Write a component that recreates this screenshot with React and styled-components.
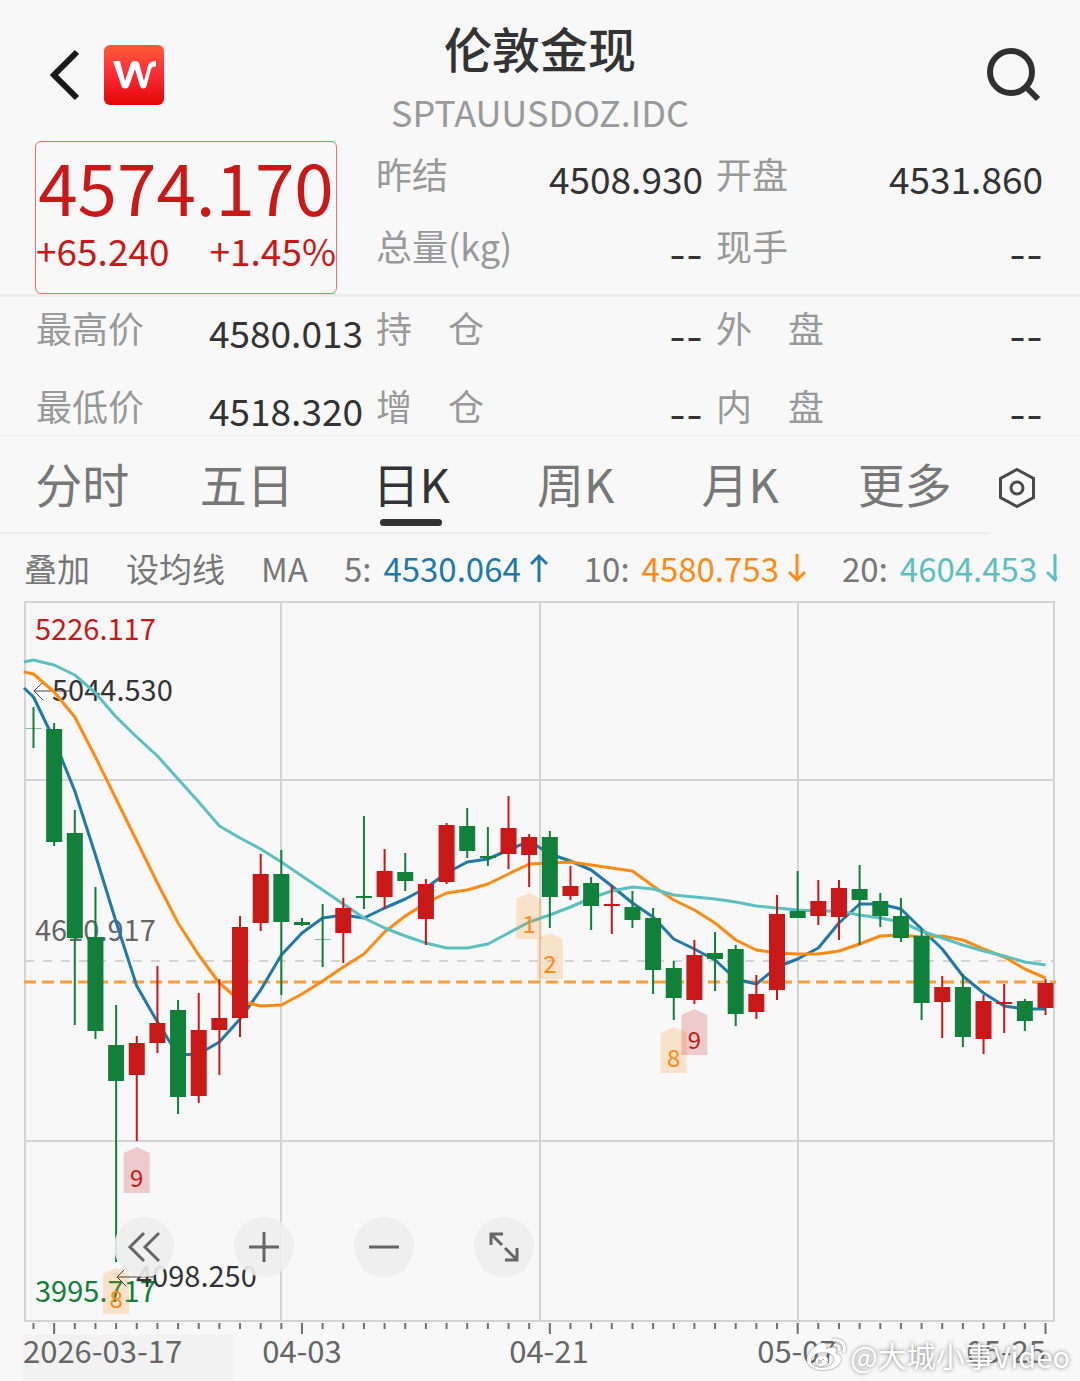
import React, { useState } from 'react';
import styled, { createGlobalStyle } from 'styled-components';
import { FaWeibo } from 'react-icons/fa';

const RED = '#c81818';
const GREEN = '#10803a';
const BLUE = '#2179a8';
const ORANGE = '#ff8a14';
const TEAL = '#5cc0bf';

const CHART_TOP = 2;
const CHART_BOTTOM = 721;
const CHART_LEFT = 25;
const CHART_RIGHT = 1054;
const CANDLE_WIDTH = 16;

const summary = [
  { label: '昨结', value: '4508.930' },
  { label: '开盘', value: '4531.860' },
  { label: '总量(kg)', value: '--' },
  { label: '现手', value: '--' },
];

const details = [
  { label: '最高价', value: '4580.013' },
  { label: '持\u3000仓', value: '--' },
  { label: '外\u3000盘', value: '--' },
  { label: '最低价', value: '4518.320' },
  { label: '增\u3000仓', value: '--' },
  { label: '内\u3000盘', value: '--' },
];

const tabs = ['分时', '五日', '日K', '周K', '月K', '更多'];

const averages = [
  { period: 5, value: '4530.064', color: BLUE, up: true },
  { period: 10, value: '4580.753', color: ORANGE, up: false },
  { period: 20, value: '4604.453', color: TEAL, up: false },
];

// [up, high, low, body top, body bottom]
const candles = [
  [0, 107, 148, 128, 128],
  [0, 123, 246, 129, 242],
  [0, 210, 425, 233, 338],
  [0, 287, 439, 337, 431],
  [0, 405, 662, 445, 481],
  [1, 436, 541, 443, 475],
  [1, 366, 453, 423, 443],
  [0, 400, 514, 410, 497],
  [1, 393, 503, 430, 496],
  [1, 379, 475, 418, 430],
  [1, 316, 437, 327, 418],
  [1, 254, 331, 274, 323],
  [0, 250, 395, 274, 322],
  [0, 318, 326, 322, 325],
  [0, 304, 367, 339, 339],
  [1, 298, 363, 308, 333],
  [0, 216, 309, 296, 297],
  [1, 249, 309, 271, 297],
  [0, 253, 291, 272, 281],
  [1, 279, 345, 284, 319],
  [1, 223, 284, 225, 282],
  [0, 208, 258, 226, 251],
  [0, 227, 266, 256, 257],
  [1, 196, 269, 228, 254],
  [1, 234, 287, 237, 255],
  [0, 231, 328, 237, 297],
  [1, 266, 300, 286, 296],
  [0, 277, 330, 283, 306],
  [1, 285, 334, 304, 305],
  [0, 291, 328, 307, 320],
  [0, 308, 394, 318, 370],
  [0, 361, 420, 368, 398],
  [1, 340, 404, 355, 400],
  [0, 332, 391, 353, 359],
  [0, 345, 426, 349, 414],
  [1, 375, 419, 394, 412],
  [1, 295, 400, 314, 390],
  [0, 271, 318, 311, 318],
  [1, 280, 325, 301, 316],
  [1, 280, 340, 288, 317],
  [0, 265, 345, 289, 300],
  [0, 293, 327, 301, 316],
  [0, 298, 342, 316, 338],
  [0, 329, 420, 336, 403],
  [1, 376, 438, 387, 402],
  [0, 374, 447, 387, 437],
  [1, 395, 454, 401, 439],
  [1, 384, 433, 402, 403],
  [0, 399, 431, 401, 421],
  [1, 379, 415, 383, 408],
];

// the first value of each line sits on the left edge of the chart
const lines = [
  {
    color: BLUE,
    values: [
      88, 97, 140, 191, 255, 322, 386, 422, 455, 454, 442, 419, 390, 355, 333,
      318, 315, 318, 308, 299, 288, 273, 262, 259, 250, 241, 254, 261, 270, 286,
      303, 317, 339, 349, 360, 379, 384, 367, 359, 348, 323, 304, 304, 309, 329,
      349, 376, 393, 406, 409, 409,
    ],
  },
  {
    color: ORANGE,
    values: [
      72, 74, 92, 117, 157, 199, 241, 283, 323, 355, 383, 401, 406, 405, 394,
      381, 367, 354, 332, 316, 303, 293, 290, 284, 274, 264, 263, 262, 265, 268,
      271, 286, 300, 310, 323, 340, 350, 353, 354, 354, 351, 344, 336, 335, 337,
      336, 340, 349, 357, 369, 378,
    ],
  },
  {
    color: TEAL,
    values: [
      62, 60, 65, 75, 93, 117, 137, 156, 179, 202, 226, 238, 249, 262, 276, 290,
      304, 318, 328, 336, 343, 348, 348, 344, 333, 322, 315, 307, 298, 291, 287,
      289, 295, 297, 299, 302, 306, 308, 310, 311, 311, 315, 318, 322, 331, 338,
      345, 351, 356, 362, 365,
    ],
  },
];

const marks = [
  { index: 4, top: 668, text: '8', color: ORANGE },
  { index: 5, top: 547, text: '9', color: RED },
  { index: 24, top: 293, text: '1', color: ORANGE },
  { index: 25, top: 333, text: '2', color: ORANGE },
  { index: 31, top: 427, text: '8', color: ORANGE },
  { index: 32, top: 409, text: '9', color: RED },
];

const dates = [
  { x: 23, text: '2026-03-17', anchor: 'start' },
  { x: 302, text: '04-03', anchor: 'middle' },
  { x: 549, text: '04-21', anchor: 'middle' },
  { x: 797, text: '05-07', anchor: 'middle' },
  { x: 1046, text: '05-25', anchor: 'end' },
];

const candleX = (index) => 33.5 + (index * 1012) / 49;

const toPoints = (values) =>
  values.map((y, i) => `${i === 0 ? 24 : candleX(i - 1)},${y}`).join(' ');

function Chart() {
  return (
    <Canvas viewBox="0 0 1080 780" role="img" aria-label="日K">
      <rect x="23" y="735" width="210" height="45" fill="#f2f2f2" />
      <g stroke="#d4d4d4" strokeWidth="2" fill="none">
        <rect
          x={CHART_LEFT}
          y={CHART_TOP}
          width={CHART_RIGHT - CHART_LEFT}
          height={CHART_BOTTOM - CHART_TOP}
        />
        {[180, 541].map((y) => (
          <line key={y} x1={CHART_LEFT} x2={CHART_RIGHT} y1={y} y2={y} />
        ))}
        {[281, 540, 798].map((x) => (
          <line key={x} x1={x} x2={x} y1={CHART_TOP} y2={CHART_BOTTOM} />
        ))}
        <line x1="25" x2="1054" y1="361" y2="361" strokeDasharray="9 9" />
      </g>

      <ChartText x="35" y="40" fill={RED}>5226.117</ChartText>
      <ChartText x="35" y="341" fill="#666666">4610.917</ChartText>
      <ChartText x="35" y="702" fill={GREEN}>3995.717</ChartText>
      <ChartText x="52" y="101" fill="#333333">5044.530</ChartText>
      <Arrow d="M70 91H34M43 82L34 91L43 100" />

      <line
        x1="24"
        x2="1056"
        y1="382"
        y2="382"
        stroke="#ff9c3c"
        strokeWidth="3"
        strokeDasharray="12 6"
      />
      {lines.map((line) => (
        <polyline
          key={line.color}
          points={toPoints(line.values)}
          fill="none"
          stroke={line.color}
          strokeWidth="3"
          strokeLinejoin="round"
        />
      ))}

      {candles.map(([up, high, low, top, bottom], i) => {
        const x = candleX(i);
        const color = up ? RED : GREEN;
        const flat = top === bottom;
        return (
          <g key={i} fill={color}>
            <rect x={x - 1} y={high} width="2" height={low - high} />
            <rect
              x={x - CANDLE_WIDTH / 2}
              y={top}
              width={CANDLE_WIDTH}
              height={flat ? 1 : Math.max(bottom - top, 2)}
              opacity={flat ? 0.5 : 1}
            />
          </g>
        );
      })}

      {marks.map(({ index, top, text, color }) => {
        const x = candleX(index);
        return (
          <g key={index} fill={color}>
            <path
              d={`M${x} ${top}L${x + 13} ${top + 6}V${top + 46}H${x - 13}V${top + 6}Z`}
              opacity="0.2"
            />
            <MarkText x={x} y={top + 40}>{text}</MarkText>
          </g>
        );
      })}
      <ChartText x="136" y="687" fill="#333333">4098.250</ChartText>
      <Arrow d="M153 677H117M126 668L117 677L126 686" />

      <g fill="#707070">
        {candles.map((_, i) => (
          <rect
            key={i}
            x={candleX(i) - 1}
            y="723"
            width="2"
            height={i % 12 === 1 ? 11 : 6}
          />
        ))}
      </g>
      {dates.map((date) => (
        <DateText key={date.text} x={date.x} y="763" textAnchor={date.anchor}>
          {date.text}
        </DateText>
      ))}
    </Canvas>
  );
}

function QuoteItem({ label, value }) {
  return (
    <Item>
      <Label>{label}</Label>
      {value === '--' ? <EmptyValue>--</EmptyValue> : <Value>{value}</Value>}
    </Item>
  );
}

export default function App() {
  const [active, setActive] = useState('日K');

  return (
    <Page>
      <GlobalStyle />
      <Header>
        <HeaderSide>
          <IconButton aria-label="返回">
            <svg width="30" height="52" viewBox="0 0 30 52">
              <path d="M27 3L4 26L27 49" fill="none" stroke="#181818" strokeWidth="6" />
            </svg>
          </IconButton>
          <Logo viewBox="0 0 60 60" aria-label="W">
            <defs>
              <linearGradient id="logo" x1="0" y1="0" x2="0" y2="1">
                <stop offset="0" stopColor="#ff5a36" />
                <stop offset="0.45" stopColor="#fb2f3a" />
                <stop offset="1" stopColor="#e30505" />
              </linearGradient>
            </defs>
            <rect width="60" height="60" rx="6" fill="url(#logo)" />
            <path
              d="M9 16H16L21 36L27 18Q28 16 31 16Q34 16 35 18L40 36L44 21Q45.5 16 52 16V21.5Q48 21 47 24L42.5 41Q42 43.5 39 43.5Q37 43.5 36 41L31 24L25 41Q24 43.5 21.5 43.5Q18 43.5 17.5 41Z"
              fill="#ffffff"
            />
          </Logo>
        </HeaderSide>
        <HeaderCenter>
          <Title>伦敦金现</Title>
          <Code>SPTAUUSDOZ.IDC</Code>
        </HeaderCenter>
        <HeaderSide $end>
          <IconButton aria-label="搜索">
            <svg width="56" height="56" viewBox="0 0 56 56" fill="none" stroke="#303030">
              <circle cx="25" cy="25" r="21" strokeWidth="6" />
              <path d="M40 40L52 52" strokeWidth="6" />
            </svg>
          </IconButton>
        </HeaderSide>
      </Header>

      <Overview>
        <PriceBox>
          <Price>4574.170</Price>
          <Change>
            <span>+65.240</span>
            <span>+1.45%</span>
          </Change>
        </PriceBox>
        <Summary>
          {summary.map((item) => (
            <QuoteItem key={item.label} {...item} />
          ))}
        </Summary>
      </Overview>

      <Details>
        {details.map((item) => (
          <QuoteItem key={item.label} {...item} />
        ))}
      </Details>

      <TabBar>
        <Tabs>
          {tabs.map((tab) => (
            <Tab key={tab} $active={tab === active} onClick={() => setActive(tab)}>
              {tab}
            </Tab>
          ))}
        </Tabs>
        <SettingButton aria-label="设置">
          <svg width="38" height="42" viewBox="0 0 38 42" fill="none" stroke="#4a4a4a" strokeWidth="3">
            <path d="M19 2.5L35.5 11.5V30.5L19 39.5L2.5 30.5V11.5Z" />
            <circle cx="19" cy="21" r="6" />
          </svg>
        </SettingButton>
      </TabBar>

      <Indicators>
        <TextButton>叠加</TextButton>
        <TextButton>设均线</TextButton>
        <span>MA</span>
        {averages.map(({ period, value, color, up }) => (
          <Average key={period}>
            {period}:
            <AverageValue $color={color}>
              {value}
              <svg width="18" height="30" viewBox="0 0 18 30" fill="none" stroke={color} strokeWidth="3">
                <path d={up ? 'M9 29V3M1 11L9 3L17 11' : 'M9 1V27M1 19L9 27L17 19'} />
              </svg>
            </AverageValue>
          </Average>
        ))}
      </Indicators>

      <ChartArea>
        <Chart />
        <Controls>
          <RoundButton aria-label="向左">
            <svg width="36" height="36" viewBox="0 0 36 36">
              <path d="M18 4L4 18L18 32M33 4L19 18L33 32" />
            </svg>
          </RoundButton>
          <RoundButton aria-label="放大">
            <svg width="36" height="36" viewBox="0 0 36 36">
              <path d="M3 18H33M18 3V33" />
            </svg>
          </RoundButton>
          <RoundButton aria-label="缩小">
            <svg width="36" height="36" viewBox="0 0 36 36">
              <path d="M3 18H33" />
            </svg>
          </RoundButton>
          <RoundButton aria-label="全屏">
            <svg width="36" height="36" viewBox="0 0 36 36">
              <path d="M5 16V5H17M5 5L16 16M31 19V31H19M31 31L19 19" />
            </svg>
          </RoundButton>
        </Controls>
        <Watermark>
          <FaWeibo size={39} />
          @大城小事Video
        </Watermark>
      </ChartArea>
    </Page>
  );
}

const GlobalStyle = createGlobalStyle`
  * {
    box-sizing: border-box;
  }
  body {
    margin: 0;
    background-color: #f8f8f8;
    font-family: 'Noto Sans CJK SC', sans-serif;
  }
  button {
    padding: 0;
    border: 0;
    background: none;
    color: inherit;
    font: inherit;
    cursor: pointer;
  }
  svg {
    display: block;
  }
`;

const Page = styled.main`
  color: #333333;
  overflow: hidden;
`;

const Header = styled.header`
  display: grid;
  grid-template-columns: 1fr auto 1fr;
  height: 139px;
  padding: 0 38px 0 50px;
`;

const HeaderSide = styled.div`
  display: flex;
  align-items: center;
  justify-content: ${(props) => (props.$end ? 'flex-end' : 'flex-start')};
  gap: 24px;
  height: 150px;
`;

const HeaderCenter = styled.div`
  padding: 15px 12px 0 0;
  text-align: center;
`;

const IconButton = styled.button`
  display: flex;
`;

const Logo = styled.svg`
  width: 60px;
  height: 60px;
`;

const Title = styled.h1`
  margin: 0;
  font-size: 48px;
  font-weight: 500;
  line-height: 64px;
`;

const Code = styled.div`
  color: #999999;
  font-size: 36px;
  line-height: 64px;
`;

const Overview = styled.section`
  display: grid;
  grid-template-columns: 1fr 1fr 1fr;
  column-gap: 13px;
  padding: 2px 37px 0 36px;
  border-bottom: 3px solid #ececec;
`;

const PriceBox = styled.div`
  width: 302px;
  height: 153px;
  margin-left: -1px;
  border: 1px solid #f56c6c;
  border-radius: 6px;
  color: ${RED};
  white-space: nowrap;
`;

const Price = styled.div`
  font-size: 71px;
  line-height: 86px;
  text-align: center;
`;

const Change = styled.div`
  display: flex;
  justify-content: space-between;
  font-size: 37px;
  line-height: 44px;
`;

const Summary = styled.dl`
  grid-column: span 2;
  display: grid;
  grid-template-columns: 1fr 1fr;
  column-gap: 13px;
  row-gap: 24px;
  align-content: start;
  margin: 0;
  padding-top: 8px;
`;

const Details = styled.dl`
  display: grid;
  grid-template-columns: 1fr 1fr 1fr;
  column-gap: 13px;
  row-gap: 30px;
  margin: 0;
  padding: 6px 37px 6px 36px;
  border-bottom: 1px solid #eeeeee;
`;

const Item = styled.div`
  display: flex;
  justify-content: space-between;
  height: 48px;
`;

const Label = styled.dt`
  color: #999999;
  font-size: 36px;
  line-height: 48px;
`;

const Value = styled.dd`
  align-self: flex-end;
  margin: 0;
  font-size: 37px;
  line-height: 38px;
`;

const EmptyValue = styled(Value)`
  font-family: Inter, sans-serif;
  line-height: 26px;
`;

const TabBar = styled.div`
  display: flex;
`;

const Tabs = styled.nav`
  flex: 1;
  display: grid;
  grid-template-columns: repeat(6, 1fr);
  padding-right: 3px;
  border-bottom: 2px solid #ececec;
`;

const Tab = styled.button`
  display: flex;
  flex-direction: column;
  align-items: center;
  padding: 14px 0 6px;
  color: ${(props) => (props.$active ? '#333333' : '#777777')};
  font-size: 47px;
  line-height: 66px;

  &::after {
    content: '';
    width: 62px;
    height: 7px;
    margin-top: 3px;
    border-radius: 4px;
    background-color: ${(props) => (props.$active ? '#333333' : 'transparent')};
  }
`;

const SettingButton = styled.button`
  flex: none;
  display: flex;
  align-items: center;
  width: 90px;
  padding: 6px 0 0 8px;
`;

const Indicators = styled.div`
  display: flex;
  align-items: center;
  gap: 36px;
  height: 66px;
  margin: 0 23px 0 24px;
  padding-top: 2px;
  overflow: hidden;
  color: #777777;
  font-size: 33px;
  line-height: 48px;
  white-space: nowrap;
`;

const TextButton = styled.button`
  flex: none;
`;

const Average = styled.div`
  flex: none;
  display: flex;
  gap: 12px;
`;

const AverageValue = styled.span`
  display: flex;
  align-items: center;
  gap: 9px;
  color: ${(props) => props.$color};
`;

const ChartArea = styled.section`
  position: relative;
`;

const Canvas = styled.svg`
  width: 100%;
  height: auto;
`;

const ChartText = styled.text`
  font-size: 29px;
`;

const MarkText = styled.text`
  font-size: 24px;
  text-anchor: middle;
`;

const DateText = styled.text`
  fill: #666666;
  font-size: 31px;
`;

const Arrow = styled.path`
  fill: none;
  stroke: #444444;
  stroke-width: 1;
`;

const Controls = styled.div`
  position: absolute;
  left: 114px;
  bottom: 103px;
  display: flex;
  gap: 60px;
`;

const RoundButton = styled.button`
  display: flex;
  align-items: center;
  justify-content: center;
  width: 60px;
  height: 60px;
  border-radius: 50%;
  background-color: rgba(237, 237, 237, 0.9);

  path {
    fill: none;
    stroke: #666666;
    stroke-width: 3;
  }
`;

const Watermark = styled.div`
  position: absolute;
  right: 10px;
  bottom: 4px;
  display: flex;
  align-items: center;
  gap: 4px;
  color: #ffffff;
  font-size: 29px;
  line-height: 42px;
  text-shadow: 0 0 4px #777777;

  svg {
    filter: drop-shadow(0 0 1px #777777);
  }
`;
